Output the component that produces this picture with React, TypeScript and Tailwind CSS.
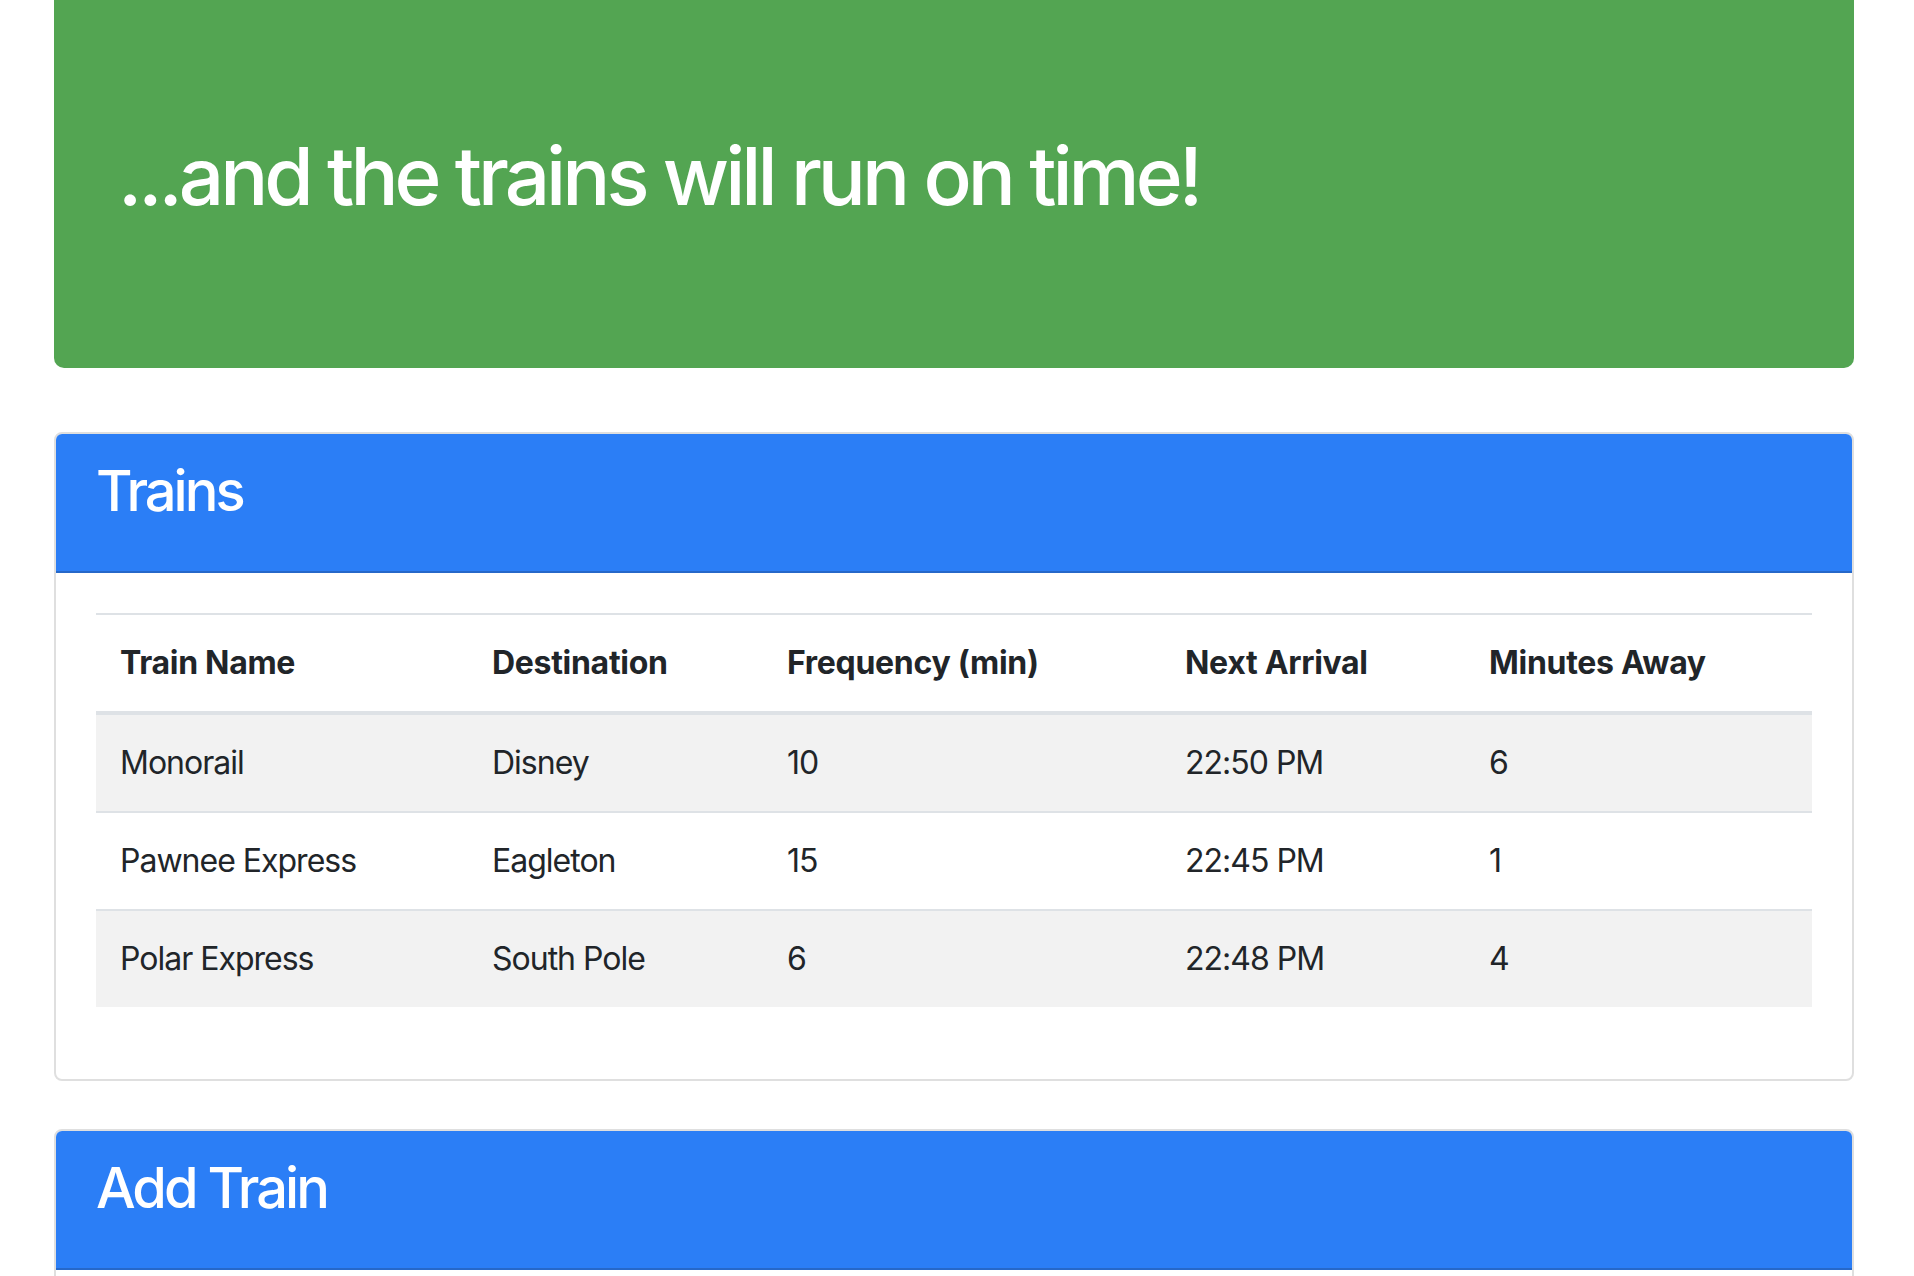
const trains = [
  { name: "Monorail", destination: "Disney", frequency: 10, next: "22:50 PM", away: 6 },
  { name: "Pawnee Express", destination: "Eagleton", frequency: 15, next: "22:45 PM", away: 1 },
  { name: "Polar Express", destination: "South Pole", frequency: 6, next: "22:48 PM", away: 4 },
];

const columns = [
  { label: "Train Name", width: "w-[372px]" },
  { label: "Destination", width: "w-[295px]" },
  { label: "Frequency (min)", width: "w-[398px]" },
  { label: "Next Arrival", width: "w-[304px]" },
  { label: "Minutes Away", width: "" },
];

const CardHeader = ({ title }: { title: string }) => (
  <div className="rounded-t-[6px] border-b-2 border-[#2668c9] bg-[#2b7ef6] px-10 pt-6 pb-6">
    <h3 className="mb-[22px] text-[56px] leading-[1.2] font-medium tracking-[-3px] text-white">
      {title}
    </h3>
  </div>
);

export default function App() {
  return (
    <div className="min-h-screen bg-white font-['Inter',sans-serif] text-[#212529]">
      <div className="ml-[54px] flex w-[1800px] flex-col">
        <section className="mb-16 rounded-b-[10px] bg-[#53a552] px-16 py-32">
          <h1 className="mb-4 text-[80px] leading-[1.2] font-medium tracking-[-4px] text-white">
            ...and the trains will run on time!
          </h1>
        </section>

        <div className="rounded-[8px] border-2 border-[#dfdfdf]">
          <CardHeader title="Trains" />
          <div className="p-10">
            <table className="mb-8 w-full border-collapse text-left text-[32px] leading-[1.5]">
              <thead>
                <tr>
                  {columns.map((c) => (
                    <th
                      key={c.label}
                      className={`${c.width} border-t-2 border-b-4 border-[#dee2e6] p-6 font-bold tracking-[-0.3px]`}
                    >
                      {c.label}
                    </th>
                  ))}
                </tr>
              </thead>
              <tbody className="tracking-[-1px]">
                {trains.map((t, i) => (
                  <tr key={t.name} className={i % 2 === 0 ? "bg-[#f2f2f2]" : ""}>
                    <td className="border-t-2 border-[#dee2e6] p-6">{t.name}</td>
                    <td className="border-t-2 border-[#dee2e6] p-6">{t.destination}</td>
                    <td className="border-t-2 border-[#dee2e6] p-6">{t.frequency}</td>
                    <td className="border-t-2 border-[#dee2e6] p-6">{t.next}</td>
                    <td className="border-t-2 border-[#dee2e6] p-6">{t.away}</td>
                  </tr>
                ))}
              </tbody>
            </table>
          </div>
        </div>

        <div className="mt-12 rounded-[8px] border-2 border-[#dfdfdf]">
          <CardHeader title="Add Train" />
          <div className="h-40 p-10" />
        </div>
      </div>
    </div>
  );
}
